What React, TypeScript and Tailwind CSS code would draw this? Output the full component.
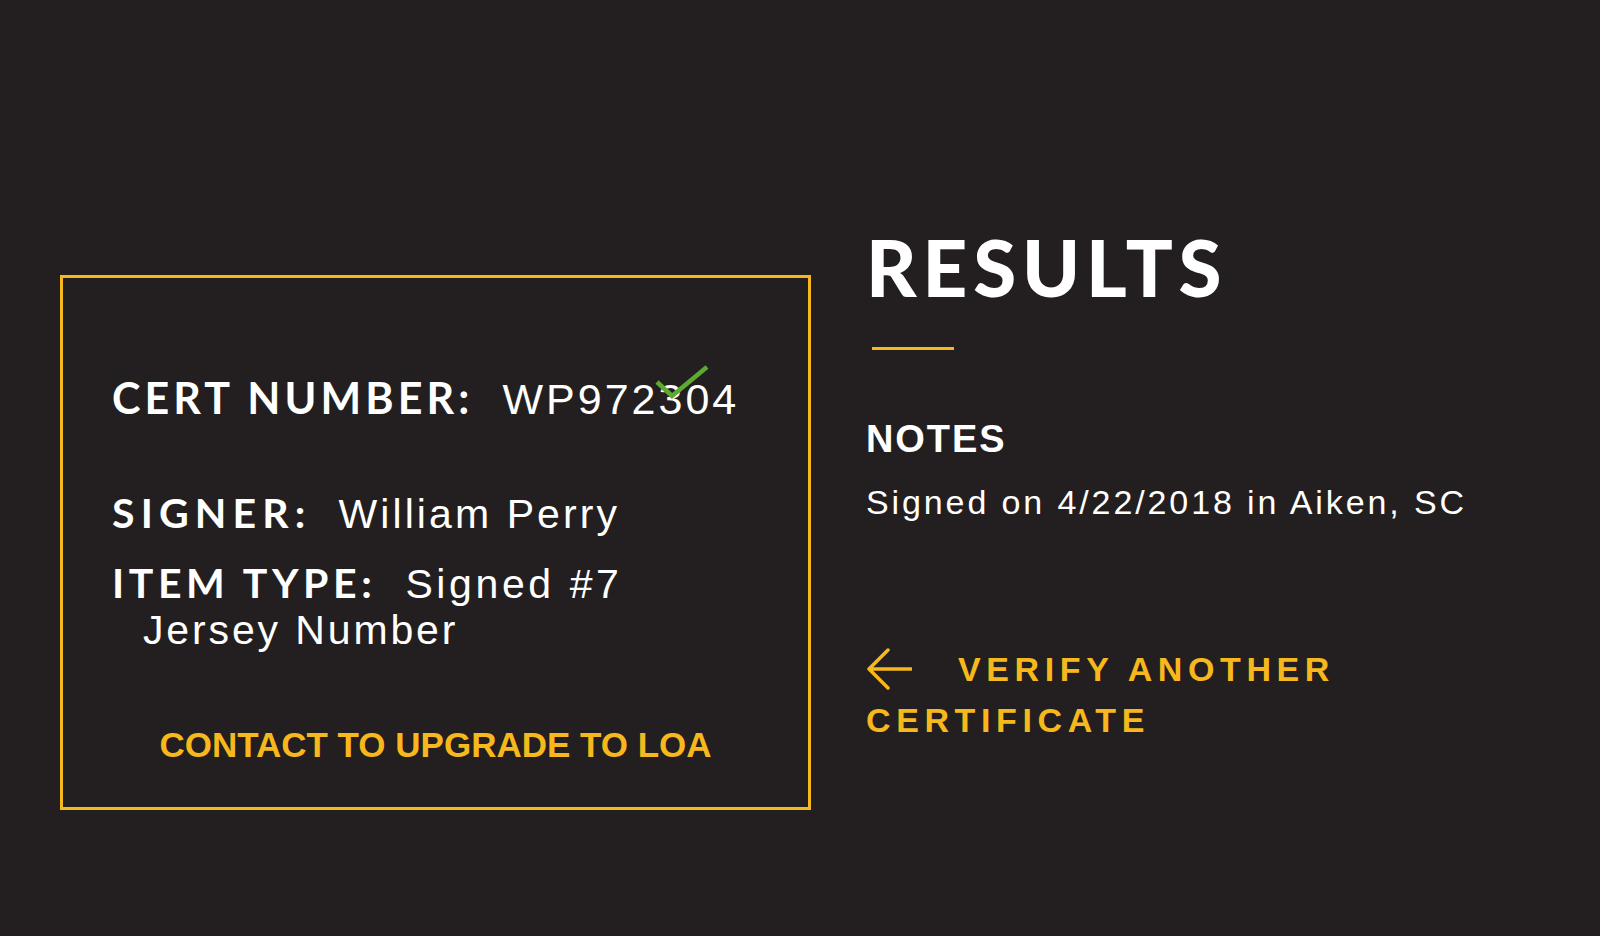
import React from 'react'

const label = "font-['Lato','Liberation_Sans',sans-serif] font-bold text-white uppercase leading-none"
const value = "font-['Liberation_Sans',Arial,sans-serif] text-white leading-none"

export default function App() {
  return (
    <div className="min-h-screen w-full bg-[#231f20] flex items-start">
      {/* cert card */}
      <div className="ml-[60px] mt-[275px] w-[751px] h-[535px] border-[3px] border-[#f7b81d] flex flex-col pl-[49px]">
        <div className="mt-[98px] h-[43px] flex items-baseline">
          <span className={`${label} text-[43px] tracking-[0.095em]`}>Cert Number:</span>
          <span className={`${value} relative ml-[29px] text-[43px] tracking-[0.07em]`}>
            WP972304
            <svg className="absolute left-[153px] top-[-14px]" width="54" height="36" viewBox="0 0 54 36" fill="none">
              <polyline points="2,18 17,32 52,3" stroke="#5cab2e" strokeWidth="4.5" strokeLinejoin="miter" />
            </svg>
          </span>
        </div>

        <div className="mt-[73px] h-[40px] flex items-baseline">
          <span className={`${label} text-[41px] tracking-[0.15em]`}>Signer:</span>
          <span className={`${value} ml-[27px] text-[41px] tracking-[0.075em]`}>William Perry</span>
        </div>

        <div className="mt-[30px] h-[40px] flex items-baseline">
          <span className={`${label} text-[41px] tracking-[0.112em]`}>Item Type:</span>
          <span className={`${value} ml-[29px] text-[41px] tracking-[0.088em]`}>Signed #7</span>
        </div>
        <div className="mt-[8px] h-[41px] pl-[31px]">
          <span className={`${value} text-[41px] tracking-[0.07em]`}>Jersey Number</span>
        </div>

        <div className="mt-[76px] -ml-[49px] text-center">
          <a className="font-['Liberation_Sans',Arial,sans-serif] font-bold text-[35px] leading-none text-[#f7b81d] uppercase">
            Contact to upgrade to LOA
          </a>
        </div>
      </div>

      {/* results */}
      <div className="ml-[55px] mt-[228px] w-[640px] flex flex-col">
        <h1 className="font-['Lato','Liberation_Sans',sans-serif] font-black text-[78px] leading-none text-white tracking-[0.075em]">
          RESULTS
        </h1>
        <div className="mt-[41px] ml-[6px] w-[82px] h-[3px] bg-[#f7b81d]" />

        <h2 className="mt-[70px] font-['Liberation_Sans',Arial,sans-serif] font-bold text-[38px] leading-none text-white tracking-[0.05em]">
          NOTES
        </h2>
        <p className="mt-[27px] font-['Liberation_Sans',Arial,sans-serif] text-[34px] leading-none text-white tracking-[0.085em]">
          Signed on 4/22/2018 in Aiken, SC
        </p>

        <a className="mt-[125px] font-['Liberation_Sans',Arial,sans-serif] font-bold text-[34px] leading-[51px] text-[#f7b81d] tracking-[0.165em] uppercase">
          <svg className="inline-block align-middle mr-[46px] -mt-[6px]" width="46" height="44" viewBox="0 0 46 44" fill="none">
            <path d="M3 22 H45 M22 3 L3 22 L22 41" stroke="#f7b81d" strokeWidth="3.5" strokeLinecap="round" strokeLinejoin="round" />
          </svg>
          Verify another certificate
        </a>
      </div>
    </div>
  )
}
